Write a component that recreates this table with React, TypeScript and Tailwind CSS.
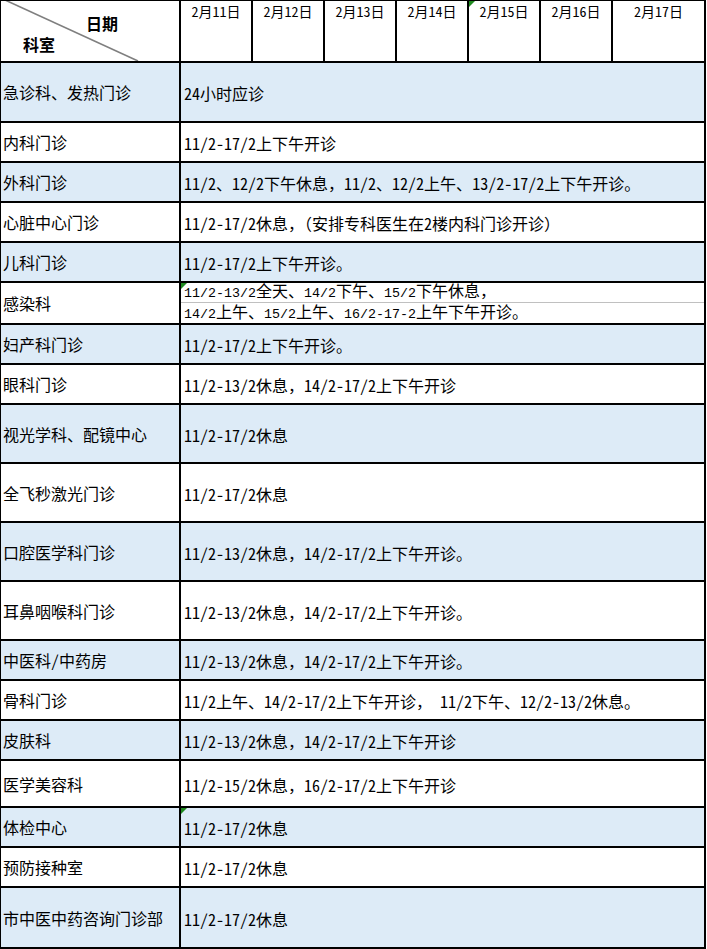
import React from "react";

type Row = { name: string; text: string | string[]; h: string; blue: boolean; mark?: boolean };

const rows: Row[] = [
  { name: "急诊科、发热门诊", text: "24小时应诊", h: "h-[60px]", blue: true },
  { name: "内科门诊", text: "11/2-17/2上下午开诊", h: "h-[40px]", blue: false },
  { name: "外科门诊", text: "11/2、12/2下午休息，11/2、12/2上午、13/2-17/2上下午开诊。", h: "h-[40px]", blue: true },
  { name: "心脏中心门诊", text: "11/2-17/2休息，（安排专科医生在2楼内科门诊开诊）", h: "h-[40px]", blue: false },
  { name: "儿科门诊", text: "11/2-17/2上下午开诊。", h: "h-[40px]", blue: true },
  {
    name: "感染科",
    text: ["11/2-13/2全天、14/2下午、15/2下午休息，", "14/2上午、15/2上午、16/2-17-2上午下午开诊。"],
    h: "h-[42px]",
    blue: false,
    mark: true,
  },
  { name: "妇产科门诊", text: "11/2-17/2上下午开诊。", h: "h-[40px]", blue: true },
  { name: "眼科门诊", text: "11/2-13/2休息，14/2-17/2上下午开诊", h: "h-[40px]", blue: false },
  { name: "视光学科、配镜中心", text: "11/2-17/2休息", h: "h-[59px]", blue: true },
  { name: "全飞秒激光门诊", text: "11/2-17/2休息", h: "h-[59px]", blue: false },
  { name: "口腔医学科门诊", text: "11/2-13/2休息，14/2-17/2上下午开诊。", h: "h-[59px]", blue: true },
  { name: "耳鼻咽喉科门诊", text: "11/2-13/2休息，14/2-17/2上下午开诊。", h: "h-[59px]", blue: false },
  { name: "中医科/中药房", text: "11/2-13/2休息，14/2-17/2上下午开诊。", h: "h-[40px]", blue: true },
  { name: "骨科门诊", text: "11/2上午、14/2-17/2上下午开诊， 11/2下午、12/2-13/2休息。", h: "h-[40px]", blue: false },
  { name: "皮肤科", text: "11/2-13/2休息，14/2-17/2上下午开诊", h: "h-[40px]", blue: true },
  { name: "医学美容科", text: "11/2-15/2休息，16/2-17/2上下午开诊", h: "h-[47px]", blue: false },
  { name: "体检中心", text: "11/2-17/2休息", h: "h-[40px]", blue: true, mark: true },
  { name: "预防接种室", text: "11/2-17/2休息", h: "h-[40px]", blue: false },
  { name: "市中医中药咨询门诊部", text: "11/2-17/2休息", h: "h-[61px]", blue: true },
];

const dates = ["2月11日", "2月12日", "2月13日", "2月14日", "2月15日", "2月16日"];

function split(s: string) {
  return s.match(/[\x20-\x7e]+|[^\x20-\x7e]+/g) || [];
}

function T({ s }: { s: string }) {
  return (
    <>
      {split(s).map((p, i) =>
        /^[\x20-\x7e]+$/.test(p) ? (
          <span key={i} className="[font-feature-settings:'hwid']">
            {p}
          </span>
        ) : (
          <span key={i}>{p}</span>
        )
      )}
    </>
  );
}

/* compact variant for the two stacked lines: smaller font boxes, same advance widths */
function TC({ s }: { s: string }) {
  return (
    <>
      {split(s).map((p, i) =>
        /^[\x20-\x7e]+$/.test(p) ? (
          <span key={i} className="[font-family:'Liberation_Mono',monospace] text-[13.34px]">
            {p}
          </span>
        ) : (
          <span key={i} className="[font-family:'Liberation_Sans','Noto_Sans_CJK_SC',sans-serif]">
            {p}
          </span>
        )
      )}
    </>
  );
}

function Mark() {
  return (
    <svg className="absolute left-0 top-0" width="6" height="6" viewBox="0 0 6 6">
      <polygon points="0,0 6,0 0,6" fill="#1f8a1f" />
    </svg>
  );
}

const font = "[font-family:'Noto_Sans_CJK_SC',sans-serif]";

export default function App() {
  return (
    <div className={`w-[707px] h-[949px] bg-white text-black ${font}`}>
      <div className="w-[706px] border-t border-l border-r-2 border-black">
        {/* header */}
        <div className="flex h-[62px] border-b-2 border-black">
          <div className="relative w-[180px] shrink-0 border-r-2 border-black flex flex-col font-bold text-[16px] leading-[16px]">
            <svg className="absolute left-0 top-0" width="178" height="60" viewBox="0 0 178 60">
              <line x1="4" y1="-1" x2="137" y2="60" stroke="#7f7f7f" strokeWidth="1.6" />
            </svg>
            <span className="ml-[85px] mt-[14px]">日期</span>
            <span className="ml-[22px] mt-[5px]">科室</span>
          </div>
          {dates.map((d, i) => (
            <div
              key={d}
              className="relative w-[72px] shrink-0 border-r-2 border-black text-center text-[14px] leading-[14px] pt-[3px]"
            >
              {i === 4 && <Mark />}
              <T s={d} />
            </div>
          ))}
          <div className="flex-1 text-center text-[14px] leading-[14px] pt-[3px]">
            <T s="2月17日" />
          </div>
        </div>
        {rows.map((r) => (
          <div
            key={r.name}
            className={`flex ${r.h} border-b-2 border-black text-[16px] leading-[20px] ${
              r.blue ? "bg-[#ddebf7]" : "bg-white"
            }`}
          >
            <div className="w-[180px] shrink-0 border-r-2 border-black flex items-center pl-[2px] whitespace-nowrap">
              <T s={r.name} />
            </div>
            <div className="relative flex-1 flex flex-col justify-center whitespace-pre">
              {r.mark && <Mark />}
              {Array.isArray(r.text) ? (
                <>
                  <div className="h-[19px] flex items-end pl-[3px] leading-[16px]">
                    <div>
                      <TC s={r.text[0]} />
                    </div>
                  </div>
                  <div className="h-px bg-[#c0c0c0]" />
                  <div className="h-[20px] flex items-center pl-[3px] leading-[16px]">
                    <div>
                      <TC s={r.text[1]} />
                    </div>
                  </div>
                </>
              ) : (
                <div className="pl-[3px] pt-[2px]">
                  <T s={r.text} />
                </div>
              )}
            </div>
          </div>
        ))}
      </div>
    </div>
  );
}
